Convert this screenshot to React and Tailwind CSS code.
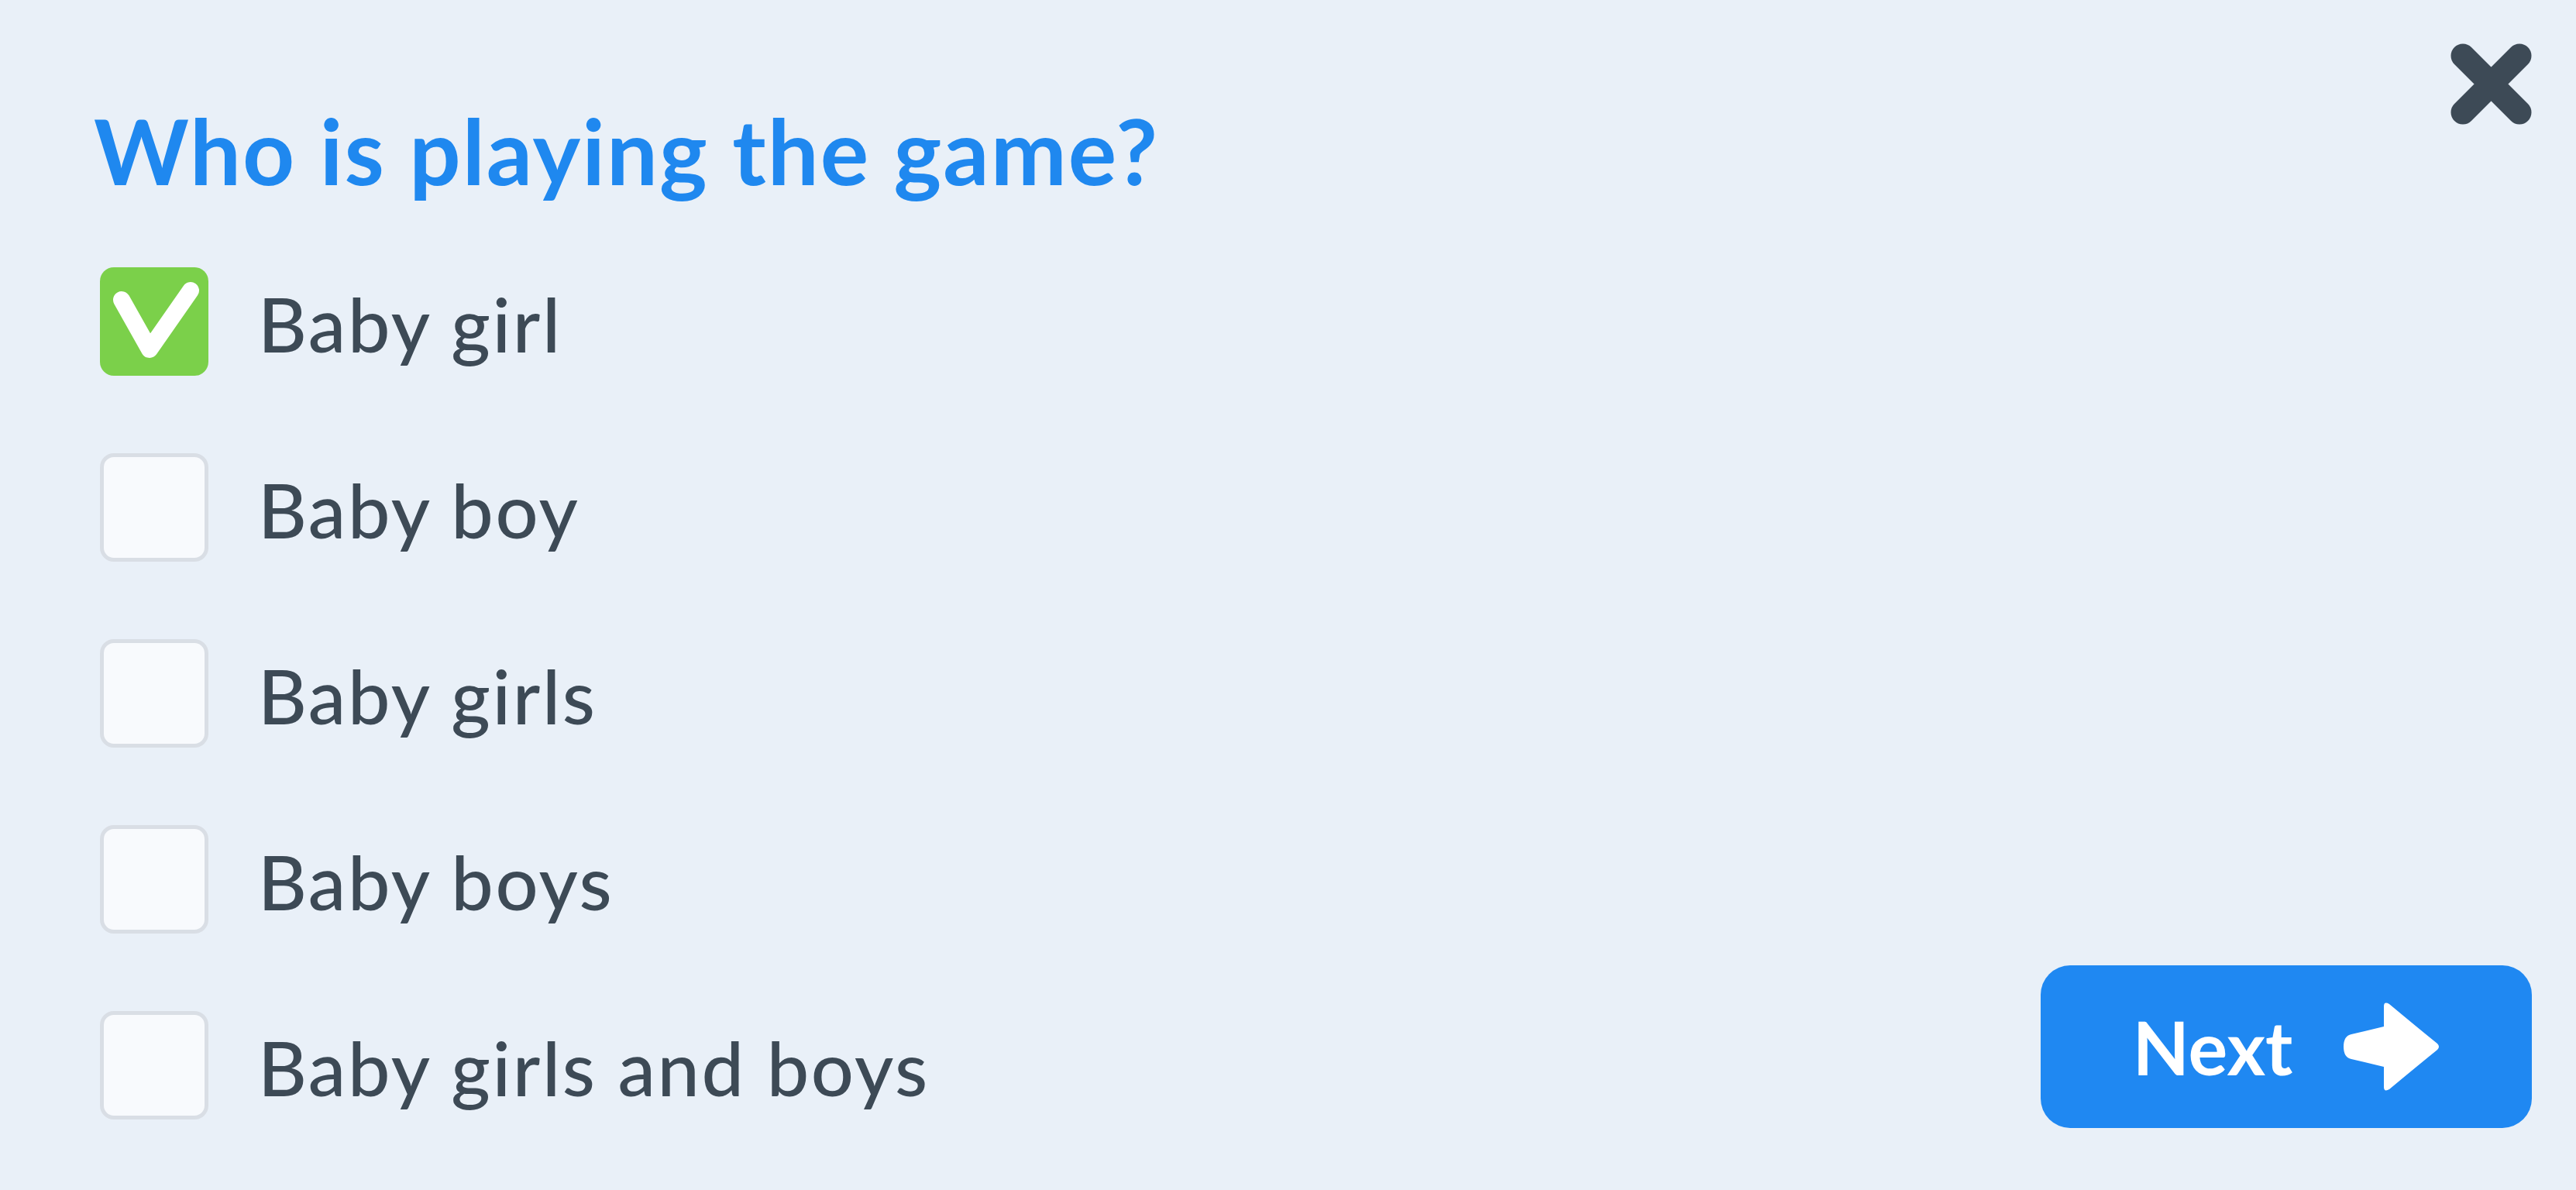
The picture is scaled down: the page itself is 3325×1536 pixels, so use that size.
import { useState } from 'react';

const options = ['Baby girl', 'Baby boy', 'Baby girls', 'Baby boys', 'Baby girls and boys'];

const CloseIcon = () => (
  <svg width="105" height="105" viewBox="0 0 105 105" fill="none">
    <path d="M16 16 L89 89 M89 16 L16 89" stroke="#3d4a56" strokeWidth="31" strokeLinecap="round" />
  </svg>
);

const CheckMark = () => (
  <svg width="140" height="140" viewBox="0 0 140 140" fill="none">
    <path d="M28 42 L64 106 L117 30" stroke="#fff" strokeWidth="22" strokeLinecap="round" strokeLinejoin="round" />
  </svg>
);

const ArrowIcon = () => (
  <svg width="124" height="116" viewBox="0 0 124 116" fill="#fff">
    <path d="M10 42 L52 32 L52 6 Q52 -1 59 3 Q95 33 121 54 Q125 58 121 62 Q95 83 59 113 Q52 117 52 110 L52 84 L10 74 Q0 72 0 58 Q0 44 10 42 Z" />
  </svg>
);

const Option = ({ label, checked, onToggle }) => (
  <button onClick={onToggle} className="flex items-center gap-[64px] text-left">
    {checked ? (
      <span className="w-[140px] h-[140px] rounded-[18px] bg-[#7bd04a] flex items-center justify-center">
        <CheckMark />
      </span>
    ) : (
      <span className="w-[140px] h-[140px] rounded-[18px] bg-[#f8fafd] border-[5px] border-[#d9dee5]" />
    )}
    <span className="text-[97px] leading-none font-medium tracking-[2.6px] text-[#3d4a56] mt-[4px]">{label}</span>
  </button>
);

export default function App() {
  const [selected, setSelected] = useState([0]);

  const toggle = (i) =>
    setSelected((s) => (s.includes(i) ? s.filter((x) => x !== i) : [...s, i]));

  return (
    <div
      className="w-[3325px] h-[1536px] bg-[#e9f0f8] flex justify-between"
      style={{ fontFamily: 'Lato, "Noto Sans", sans-serif' }}
    >
      <div className="pl-[129px] pt-[136px] flex flex-col">
        <h1 className="-ml-[8px] text-[117px] leading-none font-bold tracking-[2px] text-[#1f88ef] mb-[92px]">
          Who is playing the game?
        </h1>
        <div className="flex flex-col gap-[100px]">
          {options.map((o, i) => (
            <Option key={o} label={o} checked={selected.includes(i)} onToggle={() => toggle(i)} />
          ))}
        </div>
      </div>
      <div className="pr-[57px] pt-[56px] pb-[80px] flex flex-col items-end justify-between">
        <button className="w-[105px] h-[105px]">
          <CloseIcon />
        </button>
        <button className="w-[634px] h-[210px] rounded-[38px] bg-[#1f88f2] flex items-center justify-center gap-[66px]">
          <span className="text-[95px] leading-none font-bold text-white">Next</span>
          <ArrowIcon />
        </button>
      </div>
    </div>
  );
}
